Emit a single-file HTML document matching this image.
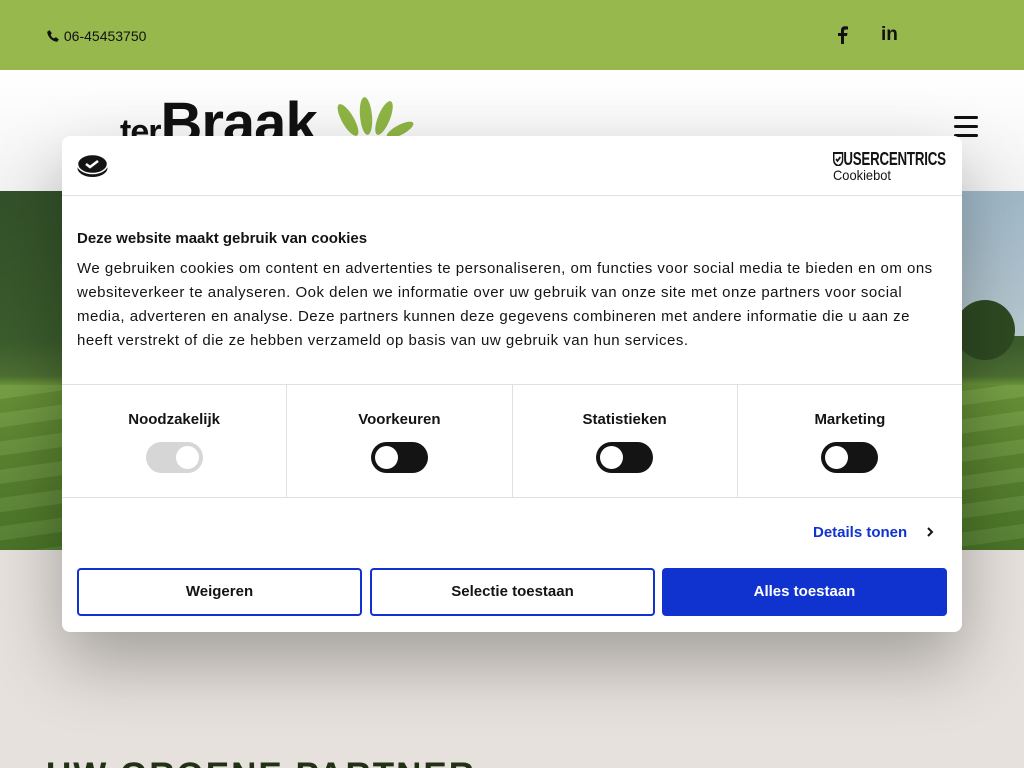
<!DOCTYPE html>
<html><head><meta charset="utf-8"><style>
*{margin:0;padding:0;box-sizing:border-box}
html,body{width:1024px;height:768px;overflow:hidden}
body{background:#e6e1dc;font-family:"Liberation Sans",Arial,sans-serif;position:relative}
.top{position:absolute;left:0;top:0;width:1024px;height:70px;background:#97b84c}
.phone{position:absolute;left:46px;top:28px;font-size:14px;color:#111}
.hdr{position:absolute;left:0;top:70px;width:1024px;height:121px;background:linear-gradient(#fff,#f3f3f3)}
.logo{position:absolute;left:120px;top:90px;font-size:58px;font-weight:bold;color:#111;letter-spacing:-1px}
.logo small{font-size:34px;font-weight:bold}
.ham{position:absolute;left:954px;top:116px;width:24px}
.ham i{display:block;height:3px;background:#111;margin-bottom:6px;border-radius:2px}
.hero{position:absolute;left:0;top:191px;width:1024px;height:359px;
background:linear-gradient(180deg,#33512a 0,#3b5d2c 150px,#4d6f33 185px,#6d9a3a 195px,#5f8a32 260px,#4e7a2a 359px)}
.sky{position:absolute;left:900px;top:191px;width:124px;height:145px;background:linear-gradient(#9fb8c8,#b7c8cf)}
.tree{position:absolute;left:955px;top:300px;width:60px;height:60px;border-radius:50%;background:#2e4a22}
.stripes{position:absolute;left:0;top:385px;width:1024px;height:165px;background:repeating-linear-gradient(172deg,rgba(255,255,255,.06) 0 14px,rgba(0,0,0,.06) 14px 28px)}
.dlg{position:absolute;left:62px;top:136px;width:900px;height:496px;background:#fff;border-radius:8px;box-shadow:0 30px 70px rgba(0,0,0,.3)}
.dh{height:60px;border-bottom:1px solid #e0e0e0;position:relative}
.uc{position:absolute;left:771px;top:13px;font-weight:bold;font-size:18px;color:#141414;transform:scaleX(.74);transform-origin:left;white-space:nowrap;letter-spacing:-.3px}
.cb{position:absolute;left:771px;top:31px;font-size:14px;color:#141414;transform:scaleX(.92);transform-origin:left}
.body{padding:34px 15px 0 15px;height:189px;border-bottom:1px solid #e0e0e0}
.body h2{font-size:15px;font-weight:bold;color:#141414;margin-bottom:10px}
.body p{font-size:15px;line-height:24px;color:#141414;letter-spacing:.5px}
.tg{display:flex;height:113px;border-bottom:1px solid #e0e0e0}
.tg div{flex:1;border-right:1px solid #e0e0e0;text-align:center;padding-top:26px;font-size:15px;font-weight:bold;color:#141414}
.tg div:last-child{border-right:none}
.sw{width:57px;height:31px;border-radius:16px;background:#141414;margin:14px auto 0;position:relative}
.sw:after{content:"";position:absolute;left:4px;top:4px;width:23px;height:23px;border-radius:50%;background:#fff}
.sw.dis{background:#d6d6d6}.sw.dis:after{left:30px}
.det{position:absolute;left:751px;top:388px;font-size:15px;font-weight:bold;color:#1032cf}
.btn{position:absolute;top:432px;height:48px;border:2px solid #1032cf;border-radius:4px;font-size:15px;font-weight:bold;color:#141414;text-align:center;line-height:44px}
.h1{position:absolute;left:46px;top:756px;font-size:35px;font-weight:bold;color:#223015;letter-spacing:2px}
</style></head><body>
<div class="top"></div>
<div class="phone"><svg width="14" height="14" viewBox="0 0 24 24" style="vertical-align:-2px"><path d="M6 2l4 5-2 3c1 3 3 5 6 6l3-2 5 4-3 4C10 21 3 14 2 5z" fill="#111"/></svg> 06-45453750</div>
<svg style="position:absolute;left:836px;top:26px" width="12" height="18" viewBox="0 0 12 18"><path d="M8 18V10h3l.5-3H8V5c0-1 .4-1.5 1.5-1.5H12V.5C11 .3 10 .2 9 .2 6.5.2 5 1.7 5 4.3V7H2v3h3v8z" fill="#111"/></svg>
<div style="position:absolute;left:881px;top:24px;font-size:19px;font-weight:bold;color:#111">in</div>
<div class="hdr"></div>
<div class="logo"><small>ter</small>Braak</div>
<svg style="position:absolute;left:336px;top:96px" width="78" height="42" viewBox="0 0 78 42"><g fill="#8fb545"><ellipse cx="12" cy="24" rx="6" ry="18" transform="rotate(-30 12 24)"/><ellipse cx="30" cy="20" rx="6" ry="19" transform="rotate(-5 30 20)"/><ellipse cx="48" cy="22" rx="6" ry="18" transform="rotate(22 48 22)"/><ellipse cx="64" cy="34" rx="5" ry="15" transform="rotate(62 64 34)"/></g></svg>
<div class="ham"><i></i><i></i><i></i></div>
<div class="hero"></div>
<div class="sky"></div>
<div class="tree"></div>
<div class="stripes"></div>
<div class="dlg">
 <div class="dh">
  <svg style="position:absolute;left:15px;top:17px" width="31" height="25" viewBox="0 0 31 25"><ellipse cx="15.5" cy="15" rx="15" ry="9" fill="#141414"/><ellipse cx="15.5" cy="11" rx="15" ry="9.5" fill="#141414" stroke="#fff" stroke-width="1.5"/><path d="M9 11l4 3 8-6" stroke="#fff" stroke-width="2.5" fill="none"/></svg>
  <div class="uc"><svg width="14" height="14" viewBox="0 0 14 14" style="vertical-align:-1px"><path d="M1 1h12v7c0 3-3 5-6 6-3-1-6-3-6-6z" fill="none" stroke="#141414" stroke-width="2"/><path d="M4 7l2 2 4-4" stroke="#141414" stroke-width="2" fill="none"/></svg>USERCENTRICS</div>
  <div class="cb">Cookiebot</div>
 </div>
 <div class="body">
  <h2>Deze website maakt gebruik van cookies</h2>
  <p>We gebruiken cookies om content en advertenties te personaliseren, om functies voor social media te bieden en om ons websiteverkeer te analyseren. Ook delen we informatie over uw gebruik van onze site met onze partners voor social media, adverteren en analyse. Deze partners kunnen deze gegevens combineren met andere informatie die u aan ze heeft verstrekt of die ze hebben verzameld op basis van uw gebruik van hun services.</p>
 </div>
 <div class="tg">
  <div>Noodzakelijk<div class="sw dis"></div></div>
  <div>Voorkeuren<div class="sw"></div></div>
  <div>Statistieken<div class="sw"></div></div>
  <div>Marketing<div class="sw"></div></div>
 </div>
 <div class="det">Details tonen <svg width="10" height="12" viewBox="0 0 10 12" style="margin-left:14px;vertical-align:-1px"><path d="M3 2l4 4-4 4" stroke="#141414" stroke-width="2" fill="none"/></svg></div>
 <div class="btn" style="left:15px;width:285px">Weigeren</div>
 <div class="btn" style="left:308px;width:285px">Selectie toestaan</div>
 <div class="btn" style="left:600px;width:285px;background:#1032cf;color:#fff">Alles toestaan</div>
</div>
<div class="h1">UW GROENE PARTNER</div>
</body></html>
